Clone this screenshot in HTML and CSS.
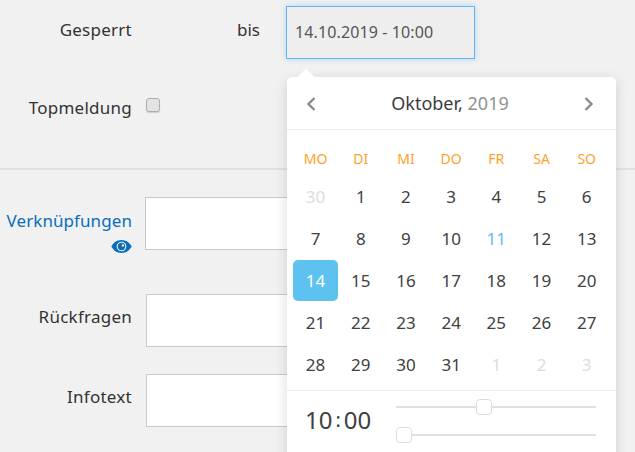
FILE: index.html
```html
<!DOCTYPE html>
<html lang="de">
<head>
<meta charset="utf-8">
<title>Formular</title>
<link rel="stylesheet" href="styles.css">
</head>
<body>
<main class="form">
  <section class="top">
    <div class="row row-locked">
      <label class="label">Gesperrt</label>
      <span class="until">bis</span>
      <input class="date-input" type="text" value="14.10.2019 - 10:00">
    </div>
    <div class="row row-top">
      <label class="label">Topmeldung</label>
      <span class="check"></span>
    </div>
  </section>
  <section class="bottom">
    <div class="row row-links">
      <div class="label label-link">
        <span>Verknüpfungen</span>
        <svg class="eye" viewBox="0 0 22 14" width="21" height="13"><path fill="#0a6ebd" fill-rule="evenodd" d="M11 0C6 0 2.200 3 0 7c2.200 4 6 7 11 7s8.800-3 11-7c-2.200-4-6-7-11-7zm0 1.800a5.200 5.200 0 1 1 0 10.400 5.200 5.200 0 0 1 0-10.400z"/><path fill="#0a6ebd" fill-rule="evenodd" d="M11 3a4 4 0 1 0 0 8 4 4 0 0 0 0-8zm1.500 1.500a1.300 1.300 0 1 1 0 2.600 1.300 1.300 0 0 1 0-2.600z"/></svg>
      </div>
      <div class="box box-links"></div>
    </div>
    <div class="row row-questions">
      <label class="label">Rückfragen</label>
      <div class="box box-text"></div>
    </div>
    <div class="row row-info">
      <label class="label">Infotext</label>
      <div class="box box-text"></div>
    </div>
  </section>
</main>

<div class="picker">
  <div class="picker-head">
    <svg class="nav" viewBox="0 0 12 16" width="12" height="16"><path d="M9.500 2 3.500 8l6 6" fill="none" stroke="#8a8a8a" stroke-width="2.400"/></svg>
    <div class="month">Oktober, <span class="year">2019</span></div>
    <svg class="nav" viewBox="0 0 12 16" width="12" height="16"><path d="M2.500 2l6 6-6 6" fill="none" stroke="#8a8a8a" stroke-width="2.400"/></svg>
  </div>
  <div class="cal">
    <span class="wd">MO</span><span class="wd">DI</span><span class="wd">MI</span><span class="wd">DO</span><span class="wd">FR</span><span class="wd">SA</span><span class="wd">SO</span>
    <span class="d off">30</span><span class="d">1</span><span class="d">2</span><span class="d">3</span><span class="d">4</span><span class="d">5</span><span class="d">6</span>
    <span class="d">7</span><span class="d">8</span><span class="d">9</span><span class="d">10</span><span class="d today">11</span><span class="d">12</span><span class="d">13</span>
    <span class="d sel">14</span><span class="d">15</span><span class="d">16</span><span class="d">17</span><span class="d">18</span><span class="d">19</span><span class="d">20</span>
    <span class="d">21</span><span class="d">22</span><span class="d">23</span><span class="d">24</span><span class="d">25</span><span class="d">26</span><span class="d">27</span>
    <span class="d">28</span><span class="d">29</span><span class="d">30</span><span class="d">31</span><span class="d off">1</span><span class="d off">2</span><span class="d off">3</span>
  </div>
  <div class="time">
    <div class="clock"><span>10</span><span class="colon">:</span><span>00</span></div>
    <div class="sliders">
      <div class="slider"><span class="thumb thumb-hour"></span></div>
      <div class="slider"><span class="thumb thumb-min"></span></div>
    </div>
  </div>
</div>
</body>
</html>
```
FILE: styles.css
```css
* { box-sizing: border-box; }
html, body { margin: 0; height: 100%; }
body {
  width: 635px;
  height: 452px;
  overflow: hidden;
  position: relative;
  background: #f1f1f1;
  font-family: "Noto Sans", "Open Sans", sans-serif;
  font-size: 17px;
  color: #333;
}
.form { display: flex; flex-direction: column; }
.top { height: 170px; padding-top: 6px; border-bottom: 2px solid #e2e2e2; }
.row { display: flex; }
.label { width: 132px; flex: none; text-align: right; line-height: 22px; letter-spacing: .25px; }
.row-locked { height: 53px; }
.row-locked .label { padding-top: 13px; height: 48px; }
.row-locked .until { padding-top: 13px; }
.until { margin-left: 105px; width: 49px; line-height: 22px; }
.date-input {
  width: 189px;
  height: 53px;
  padding: 0 8px 1px;
  border: 1px solid #63b6f5;
  background: #eeeeee;
  box-shadow: 0 0 6px rgba(92, 184, 238, .45);
  font: inherit;
  font-size: 16px;
  letter-spacing: .12px;
  color: #555;
  outline: none;
}
.row-top { margin-top: 38px; align-items: flex-start; }
.check {
  width: 14px;
  height: 14px;
  margin: 1px 0 0 14px;
  border: 1px solid #adadad;
  border-radius: 3px;
  background: #e3e3e3;
  box-shadow: 0 1px 1px rgba(0,0,0,.15);
}
.bottom { padding-top: 27px; }
.row-links { height: 97px; }
.row-links .label { padding-top: 13px; display: flex; flex-direction: column; align-items: flex-end; letter-spacing: .08px; }
.label-link { color: #0a6ebd; }
.eye { margin-top: 8px; }
.box { flex: none; height: 53px; width: 400px; background: #fff; border: 1px solid #c9c9c9; }
.box-links { margin-left: 13px; }
.box-text { margin-left: 14px; }
.row-questions { height: 80px; align-items: flex-start; }
.row-questions .label, .row-info .label { padding-top: 12px; }
.picker {
  position: absolute;
  left: 287px;
  top: 77px;
  width: 329px;
  height: 400px;
  background: #fff;
  border-radius: 5px;
  box-shadow: 0 3px 13px rgba(0,0,0,.14);
}
.picker::before {
  content: "";
  position: absolute;
  left: 13px;
  top: -6px;
  width: 12px;
  height: 12px;
  background: #fff;
  transform: rotate(45deg);
}
.picker-head {
  position: relative;
  height: 53px;
  padding: 0 21px 0 18px;
  display: flex;
  align-items: center;
  justify-content: space-between;
  border-bottom: 1px solid #ececec;
}
.nav { margin-top: 2px; }
.month { font-size: 18px; color: #3c3c3c; }
.year { color: #929292; }
.cal {
  display: grid;
  grid-template-columns: repeat(7, 45.2px);
  grid-template-rows: 46px repeat(5, 42px);
  padding: 0 0 0 6px;
  height: 261px;
  border-bottom: 1px solid #ececec;
  justify-items: center;
  align-items: start;
  text-align: center;
}
.wd { font-size: 14px; color: #ff9f2e; line-height: 58px; height: 46px; }
.d { font-size: 17px; color: #404040; width: 45px; height: 42px; line-height: 42px; }
.off { color: #dcdcdc; }
.today { color: #5bc0ee; }
.sel { background: #5dc2ef; color: #fff; border-radius: 5px; height: 41px; }
.time { display: flex; padding-left: 18px; }
.clock { width: 91px; padding-top: 12px; font-size: 24px; line-height: 33px; color: #404040; display: flex; }
.colon { margin: 0 3px; font-size: 20px; }
.sliders { width: 200px; }
.slider { position: relative; height: 2px; background: #e0e0e0; margin-top: 15px; }
.slider + .slider { margin-top: 26px; }
.thumb { position: absolute; top: -7px; width: 16px; height: 16px; background: #fff; border: 1px solid #dcdcdc; border-radius: 4px; }
.thumb-hour { left: 80px; }
.thumb-min { left: 0; }
```
